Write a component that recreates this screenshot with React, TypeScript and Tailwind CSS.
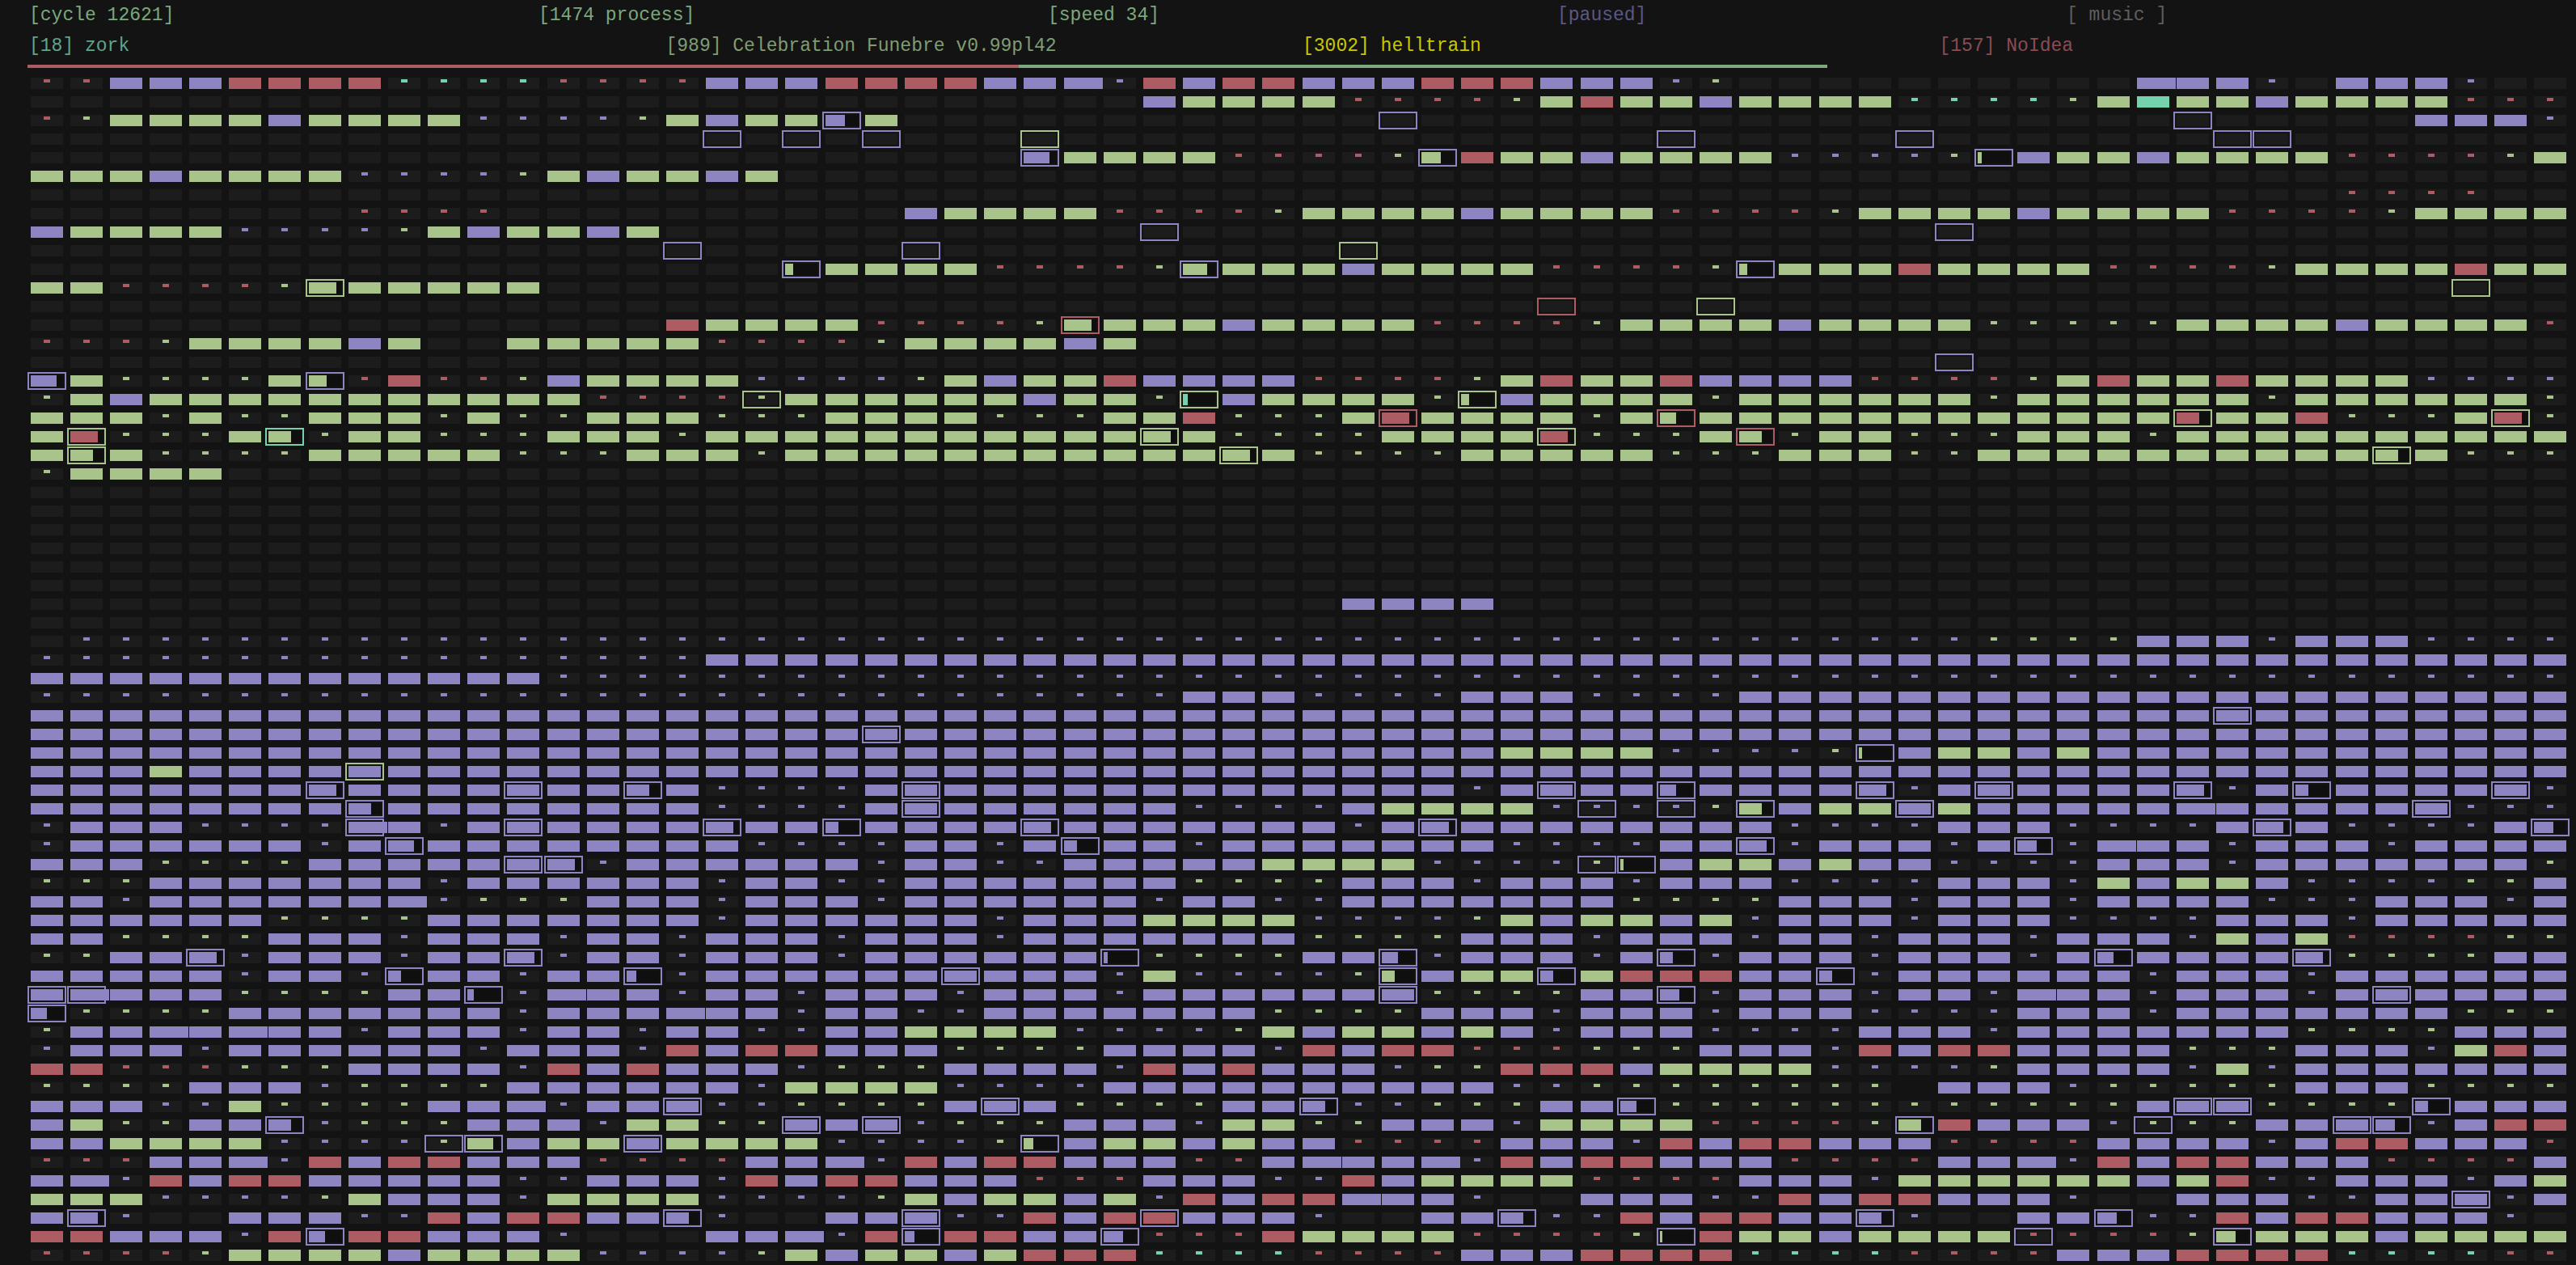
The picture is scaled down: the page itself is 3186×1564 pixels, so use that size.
const P32 = 'P'.repeat(32);
const E32 = '.'.repeat(32);
const E64 = E32 + E32;

// corewar arena, one string per row: . empty, lower case = small mark, upper case = owned cell, W = wide cell
const ROWS: string[] = [
  'rrPPPRRRRttttrrrrPPPRRRRPPWpRPRR' + 'PPPRRRPPPpg..........WPPp.PPPp..',
  '............................PGGG' + 'GrrrrgGRGGPGGGGttttgGTGGPGGGGrrr',
  'rgGGGGPGGGG' + 'ppppgGPGG.G..........' + '............................PPPp',
  E64,
  '..........................GGGGrr' + 'rrg.RGGPGGGGppppg.PGGPGGGGrrrrgG',
  'GGGPGGGGppppgGPGGPG.............' + E32,
  E32 + '..........................rrrr..',
  '........rrrr..........PGGGGrrrrg' + 'GGGGPGGGGrrrrgGGGGPGGGGrrrrgGGGG',
  'PGGGGppppgGPGGPG................' + E32,
  E64,
  '....................GGGGrrrrg.GG' + 'GPGGGGrrrrg.GGGRGGGGrrrrgGGGGRGG',
  'GGrrrrg.GGGGG...................' + E32,
  E64,
  '................RGGGGrrrrg.GGGPG' + 'GGGrrrrgGGGGPGGGGgggggGGGGPGGGGr',
  'rrrgGGGGPG..GGGGGrrrrgGGGGPG....' + E32,
  E64,
  '.GggggG.rRrrgPGGGGppppgGPGGRPPPP' + 'rrrrgGRGGRPPPPrrrrgGRGGRGGGGpppp',
  'gGPGGGGGGGGGGGrrrr.GGGGGGPGGg.PG' + 'GGGg.PGGGGgGGGGGGgGGGGGGgGGGGGGg',
  'GGGgGggGGGgGggGGGgggGGGGgggGGRgg' + 'gG.GGGGgG.GGGGGGGGGGGG.GGRgggG.g',
  'G.gggG.gGGgggGGGgGGGGGGGGGGG.Ggg' + 'ggGGGG.gggG.gGGgggGGGgGGGGGGGGGG',
  'G.GggggGGGGGgggGGGgGGGGGGGGGGG.G' + 'ggggGGGGGgggGGGggGGGGGGGGGG.Gggg',
  'gGGGG...........................' + E32,
  E64,
  E64,
  E64,
  E64,
  E64,
  E64,
  '.................................PPPP..........................' + '.',
  E64,
  '.' + 'p'.repeat(31) + 'pppppppppppppppppggggPPPpPPPpppp',
  'p'.repeat(17) + 'P'.repeat(15) + P32,
  'P'.repeat(13) + 'p'.repeat(51),
  'p'.repeat(29) + 'PPP' + 'ppppPPPpppp' + 'P'.repeat(21),
  P32 + P32,
  P32 + P32,
  P32 + 'PPPPPGGGGppppg.PGGPG' + 'P'.repeat(12),
  'PPPG' + 'P'.repeat(60),
  'PPPPPPP.PPPP.PP.PppppP.PPPPPPPPP' + 'PPPPpP.PP.PPPP.pP.PPPP.pP.PPPP.p',
  'PPPPPPPP.PPPPPPPPppppP.PPPPPPppp' + 'pPGGGGp.p.g.PGG.GPPPPPWPPPPP.ppp',
  'pPPPpppp.PpP.PPPP.PP.PPPP.PPPPPP' + 'PpP.PPPPPPPPppppPPPppppP.PppppP.',
  'pPPPPPPpP.PPPPPPPPppppPPpP.PPpPP' + 'PPPPPppppPP.pPPPpP.pWPPpPPPpPPPP',
  'PPPggggPPPPP..pPPPPPPpPPppPPPPPG' + 'GGGpppp..PGGPGPPppppPPPpPPPPPPPg',
  'gggPPPPPPPpPPPPPPpPPppPPPPPPPggg' + 'gPPPpPPPpPPPppppPPPpGPGGPppppggP',
  'PPpPPPPPPWpgggPPPpPPPpPPPPPPpPPp' + 'pPPPPPPPggggPPPpPPPpPPPPpppPPPpP',
  'PPPPPPggggPPPPPPPpPPPPPPpPPPGGGG' + 'ppppgGPGGPGpPPPpPPPppppPPPpPPPPP',
  'PPggggPPPpPPPpPPpPPPpPPPpPPPPPPP' + 'ggggPPPpPPPpPPpPPPpPPPpGPGrrrrgg',
  'ggPP.pPPPpPP.pPPpPPPpPPPPPP.gggg' + 'PP.pPPPpP.pPPPpPPPpP.PPPP.ggggPP',
  'PPPPPpPPp.PPpPP.pPPPPPP.PPPpGppp' + 'pg.PGG.GRRRPP.pPPPPPPpPPPpPPPPPP',
  '..PPPggggPP.pWPPpPPpPPPpPPPpPPPP' + 'PP.ggggPP.pPPPpPPpWPPpPPPpP.PPPP',
  '.ggggPPPPPPPpPPPWPPpPPppPPPPPPPg' + 'gggPPPpPPPpPPPppppPPPpPPPPPPPggg',
  'gPPWPWPPpPPPpPPpPPppPPGGGGppppgG' + 'PGGPGPpPPPppppPPPpPPPPPPPggggPPP',
  'pPPPpPPPPPPpPPPpRPRRPPPggggPPPPp' + 'RPRRrrrgggPPPpRPRRPPPPgggPPPpGRP',
  'RRrrrgggPPPPpRPRPPPpgggPPPPpRPRP' + 'PPpggRRRPGGGGppppgPPPPpGpPPPPPPP',
  'ggggPPPpggggPPPPPPpGGGGppppPPPPP' + 'PPPPPppgggggggg_PPPpgggggPPPgggg',
  'PPPppGggggPPWpPP.ppggggP.PggggPP' + '.ppgggPP.ggggggggggggP..gggg.PPP',
  'PGggPP.pgggPPPpGGgg.P.pgggPPPpGG' + 'ggPPPpGGGGrrrrg.RPPPp.ggPP..pPRR',
  'PPGGGGpppp..PGG.GGGGppppg.PGGPGP' + 'PrrrrPPPpRPRRPPPrrrrPPPPpPRRPPPr',
  'rrrPPWpRPRRPPPrrrrPPWpRPRRPPPrrP' + 'WPPWpRPRRPPPrrrrPPWpRPRRPPPrrrrP',
  'PWpRPRRPPPPPppPPPpRPRRPPPrrrPPPp' + 'pRPGGGGrrrrPPPpGGGGGGPGRppPPPpPG',
  'GGGppppgGPPPpGGGGppppgGPGGPGpRPR' + 'RWPPp..PPPppRPRRPPPp..PPPppPP.pP',
  'P.p..PPPppRPRRPP.p..PP.ppRPR.PPP' + 'p..PP.ppRPRRPP.p..PP.ppRPRRPPPp.',
  'RRPPPpR.RRPPPp...PPWpR.RRPP.rrrR' + 'GGGGrrrrg.RGGPGGGG.rrrg.GGGPGGGG',
  'rrrrgGGGGPGGGGppppgGPGGPGRRRtttt' + 'rrrrPPPRRRRttttrrrrPPPRRRRttttrr',
];

// process cursors: row, column, outline, fill, fill percent (0 = small mark, none = empty)
type Cursor = [number, number, Tone, Tone?, number?];
type Tone = 'p' | 'g' | 'r' | 't';

const CURSORS: Cursor[] = [
  [2, 20, 'p', 'p', 60], [2, 34, 'p'], [2, 54, 'p'],
  [3, 17, 'p'], [3, 19, 'p'], [3, 21, 'p'], [3, 25, 'g'], [3, 41, 'p'], [3, 47, 'p'], [3, 55, 'p'], [3, 56, 'p'],
  [4, 25, 'p', 'p', 80], [4, 35, 'p', 'g', 60], [4, 49, 'p', 'g', 12],
  [8, 28, 'p'], [8, 48, 'p'],
  [9, 16, 'p'], [9, 22, 'p'], [9, 33, 'g'],
  [10, 19, 'p', 'g', 25], [10, 29, 'p', 'g', 75], [10, 43, 'p', 'g', 25],
  [11, 7, 'g', 'g', 85], [11, 61, 'g'],
  [12, 38, 'r'], [12, 42, 'g'],
  [13, 26, 'r', 'g', 85],
  [15, 48, 'p'],
  [16, 0, 'p', 'p', 80], [16, 7, 'p', 'g', 55],
  [17, 18, 'g', 'g', 0], [17, 29, 'g', 't', 15], [17, 36, 'g', 'g', 25],
  [18, 34, 'r', 'r', 85], [18, 41, 'r', 'g', 50], [18, 54, 'g', 'r', 70], [18, 62, 'g', 'r', 85],
  [19, 1, 'g', 'r', 85], [19, 6, 't', 'g', 70], [19, 28, 'g', 'g', 85], [19, 38, 'g', 'r', 85], [19, 43, 'r', 'g', 70],
  [20, 1, 'g', 'g', 70], [20, 30, 'g', 'g', 85], [20, 59, 'g', 'g', 70],
  [34, 55, 'p', 'p', 100],
  [35, 21, 'p', 'p', 100],
  [36, 46, 'p', 'g', 10],
  [37, 8, 'g', 'p', 100],
  [38, 7, 'p', 'p', 85], [38, 12, 'p', 'p', 100], [38, 15, 'p', 'p', 70], [38, 22, 'p', 'p', 100], [38, 38, 'p', 'p', 100], [38, 41, 'p', 'p', 50],
  [38, 46, 'p', 'p', 85], [38, 49, 'p', 'p', 100], [38, 54, 'p', 'p', 85], [38, 57, 'p', 'p', 40], [38, 62, 'p', 'p', 100],
  [39, 8, 'p', 'p', 70], [39, 22, 'p', 'p', 100], [39, 39, 'p', 'p', 0], [39, 41, 'p', 'p', 0], [39, 43, 'p', 'g', 70], [39, 47, 'p', 'p', 100], [39, 60, 'p', 'p', 100],
  [40, 8, 'p', 'p', 120], [40, 12, 'p', 'p', 100], [40, 17, 'p', 'p', 85], [40, 20, 'p', 'p', 40], [40, 25, 'p', 'p', 85], [40, 35, 'p', 'p', 85], [40, 56, 'p', 'p', 85], [40, 63, 'p', 'p', 60],
  [41, 9, 'p', 'p', 80], [41, 26, 'p', 'p', 40], [41, 43, 'p', 'p', 85], [41, 50, 'p', 'p', 60],
  [42, 12, 'p', 'p', 100], [42, 13, 'p', 'p', 85], [42, 39, 'p', 'g', 0], [42, 40, 'p', 'g', 10],
  [47, 4, 'p', 'p', 85], [47, 12, 'p', 'p', 85], [47, 27, 'p', 'p', 12], [47, 34, 'p', 'p', 50], [47, 41, 'p', 'p', 40], [47, 52, 'p', 'p', 50], [47, 57, 'p', 'p', 85],
  [48, 9, 'p', 'p', 40], [48, 15, 'p', 'p', 30], [48, 23, 'p', 'p', 100], [48, 34, 'p', 'g', 40], [48, 38, 'p', 'p', 40], [48, 45, 'p', 'p', 40],
  [49, 0, 'p', 'p', 100], [49, 1, 'p', 'p', 120], [49, 11, 'p', 'p', 20], [49, 34, 'p', 'p', 100], [49, 41, 'p', 'p', 60], [49, 59, 'p', 'p', 100],
  [50, 0, 'p', 'p', 50],
  [55, 16, 'p', 'p', 100], [55, 24, 'p', 'p', 100], [55, 32, 'p', 'p', 70], [55, 40, 'p', 'p', 50], [55, 54, 'p', 'p', 100], [55, 55, 'p', 'p', 100], [55, 60, 'p', 'p', 40],
  [56, 6, 'p', 'p', 70], [56, 19, 'p', 'p', 100], [56, 21, 'p', 'p', 100], [56, 47, 'p', 'g', 70], [56, 53, 'p', 'g', 0], [56, 58, 'p', 'p', 100], [56, 59, 'p', 'p', 60],
  [57, 10, 'p', 'g', 0], [57, 11, 'p', 'g', 80], [57, 15, 'p', 'p', 100], [57, 25, 'p', 'g', 30],
  [60, 61, 'p', 'p', 100],
  [61, 1, 'p', 'p', 85], [61, 16, 'p', 'p', 70], [61, 22, 'p', 'p', 100], [61, 28, 'p', 'r', 100], [61, 37, 'p', 'p', 70], [61, 46, 'p', 'p', 70], [61, 52, 'p', 'p', 60],
  [62, 7, 'p', 'p', 50], [62, 22, 'p', 'p', 30], [62, 27, 'p', 'p', 60], [62, 41, 'p', 'g', 8], [62, 50, 'p', 'r', 0], [62, 55, 'p', 'g', 60],
];

const BG: Record<Tone, string> = {
  p: 'bg-[#8c85c1]',
  g: 'bg-[#a8c48a]',
  r: 'bg-[#ae5c64]',
  t: 'bg-[#75d2ae]',
};

const RING: Record<Tone, string> = {
  p: 'outline-[#8c85c1]',
  g: 'outline-[#a8c48a]',
  r: 'outline-[#ae5c64]',
  t: 'outline-[#75d2ae]',
};

const cursorAt = new Map(CURSORS.map((c) => [c[0] * 64 + c[1], c]));

function Mark({ tone }: { tone: Tone }) {
  return <div className={`w-[8px] h-[4px] mx-auto mt-[2px] ${BG[tone]}`} />;
}

function CursorCell({ cursor }: { cursor: Cursor }) {
  const [, , ring, fill, pct] = cursor;
  const partial = fill && pct ? true : false;
  return (
    <div className={`relative z-10 w-[40px] h-[14px] outline-2 outline-offset-2 ${RING[ring]} ${partial ? 'bg-[#0f0f0f]' : 'bg-[#1c1c1c]'}`}>
      {partial && <div className={`h-full ${BG[fill as Tone]}`} style={{ width: `${pct}%` }} />}
      {fill && pct === 0 && <Mark tone={fill} />}
    </div>
  );
}

function Cell({ ch }: { ch: string }) {
  switch (ch) {
    case 'P':
      return <div className="w-[40px] h-[14px] bg-[#8c85c1]" />;
    case 'G':
      return <div className="w-[40px] h-[14px] bg-[#a8c48a]" />;
    case 'R':
      return <div className="w-[40px] h-[14px] bg-[#ae5c64]" />;
    case 'T':
      return <div className="w-[40px] h-[14px] bg-[#75d2ae]" />;
    case 'W':
      return <div className="w-[48px] h-[14px] bg-[#8c85c1]" />;
    case '_':
      return <div className="w-[40px] h-[14px]" />;
    case 'p':
    case 'g':
    case 'r':
    case 't':
      return (
        <div className="w-[40px] h-[14px] bg-[#1c1c1c] overflow-hidden">
          <Mark tone={ch} />
        </div>
      );
    default:
      return <div className="w-[40px] h-[14px] bg-[#1c1c1c]" />;
  }
}

function Arena() {
  return (
    <div className="grid grid-cols-[repeat(64,40px)] gap-x-[9.16px] gap-y-[9px] pl-[37.5px] mt-[12px]">
      {ROWS.flatMap((row, r) =>
        row
          .padEnd(64, '.')
          .split('')
          .map((ch, c) => {
            const cursor = cursorAt.get(r * 64 + c);
            return cursor ? <CursorCell key={`${r}-${c}`} cursor={cursor} /> : <Cell key={`${r}-${c}`} ch={ch} />;
          }),
      )}
    </div>
  );
}

export default function App() {
  return (
    <div className="w-[3186px] h-[1564px] overflow-hidden bg-[#131313] font-['Liberation_Mono',monospace] text-[23px] whitespace-pre">
      <div className="grid grid-cols-5 h-[38px] items-center pl-[36px]">
        <span className="text-[#7aa87c]">[cycle 12621]</span>
        <span className="text-[#7aa87c]">[1474 process]</span>
        <span className="text-[#7aa87c]">[speed 34]</span>
        <span className="text-[#5b5785]">[paused]</span>
        <span className="text-[#5e5e5e]">[ music ]</span>
      </div>
      <div className="grid grid-cols-4 h-[38px] items-center pl-[36px]">
        <span className="text-[#5fa48c]">[18] zork</span>
        <span className="text-[#7f9c72]">[989] Celebration Funebre v0.99pl42</span>
        <span className="text-[#c8c800]">[3002] helltrain</span>
        <span className="text-[#8a4c54]">[157] NoIdea</span>
      </div>
      <div className="flex h-[4px] mt-[4px] ml-[34px]">
        <div className="w-[1226px] bg-[#ae5c64]" />
        <div className="w-[1000px] bg-[#7fa87c]" />
      </div>
      <Arena />
    </div>
  );
}
